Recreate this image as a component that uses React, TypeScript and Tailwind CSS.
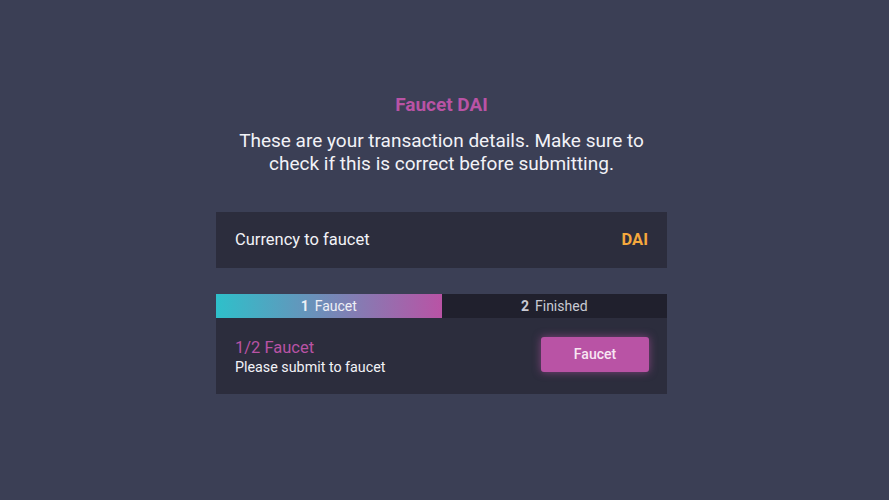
export default function App() {
  return (
    <div
      className="min-h-[500px] w-full bg-[#3b3f55] flex flex-col items-center pt-[94px] pr-[6px]"
      style={{ fontFamily: 'Roboto, "Liberation Sans", sans-serif' }}
    >
      <h1 className="text-[#b953a5] text-[19px] font-bold leading-[22px]">Faucet DAI</h1>
      <p className="mt-[13px] text-[#f2f2f7] text-[19px] leading-[23px] text-center w-[430px]">
        These are your transaction details. Make sure to check if this is correct before submitting.
      </p>

      <div className="mt-[37px] w-[451px] h-[56px] bg-[#2c2d3d] flex items-center justify-between px-[19px]">
        <span className="text-[#f2f2f7] text-[16.5px]">Currency to faucet</span>
        <span className="text-[#f5a83d] text-[16.5px] font-bold">DAI</span>
      </div>

      <div className="mt-[26px] w-[451px] bg-[#2c2d3d]">
        <div className="flex h-[24px] text-[14px]">
          <div className="flex-1 flex items-center justify-center gap-[6px] text-[#eef0f6] bg-[linear-gradient(to_right,#2ec0ca,#b953a5)]">
            <span className="font-bold">1</span>
            <span>Faucet</span>
          </div>
          <div className="flex-1 flex items-center justify-center gap-[6px] text-[#c9cad3] bg-[#20202d]">
            <span className="font-bold">2</span>
            <span>Finished</span>
          </div>
        </div>
        <div className="flex items-center justify-between h-[76px] pl-[19px] pr-[18px]">
          <div className="flex flex-col pt-[2px]">
            <span className="text-[#b953a5] text-[16.5px] leading-[20px]">1/2 Faucet</span>
            <span className="text-[#f2f2f7] text-[14.3px] leading-[19px]">Please submit to faucet</span>
          </div>
          <button className="w-[108px] h-[35px] mb-[4px] rounded-[3px] bg-[#b953a5] text-[#f8e6f3] text-[14px] font-medium shadow-[0_0_8px_rgba(185,83,165,0.6)]">
            Faucet
          </button>
        </div>
      </div>
    </div>
  )
}
